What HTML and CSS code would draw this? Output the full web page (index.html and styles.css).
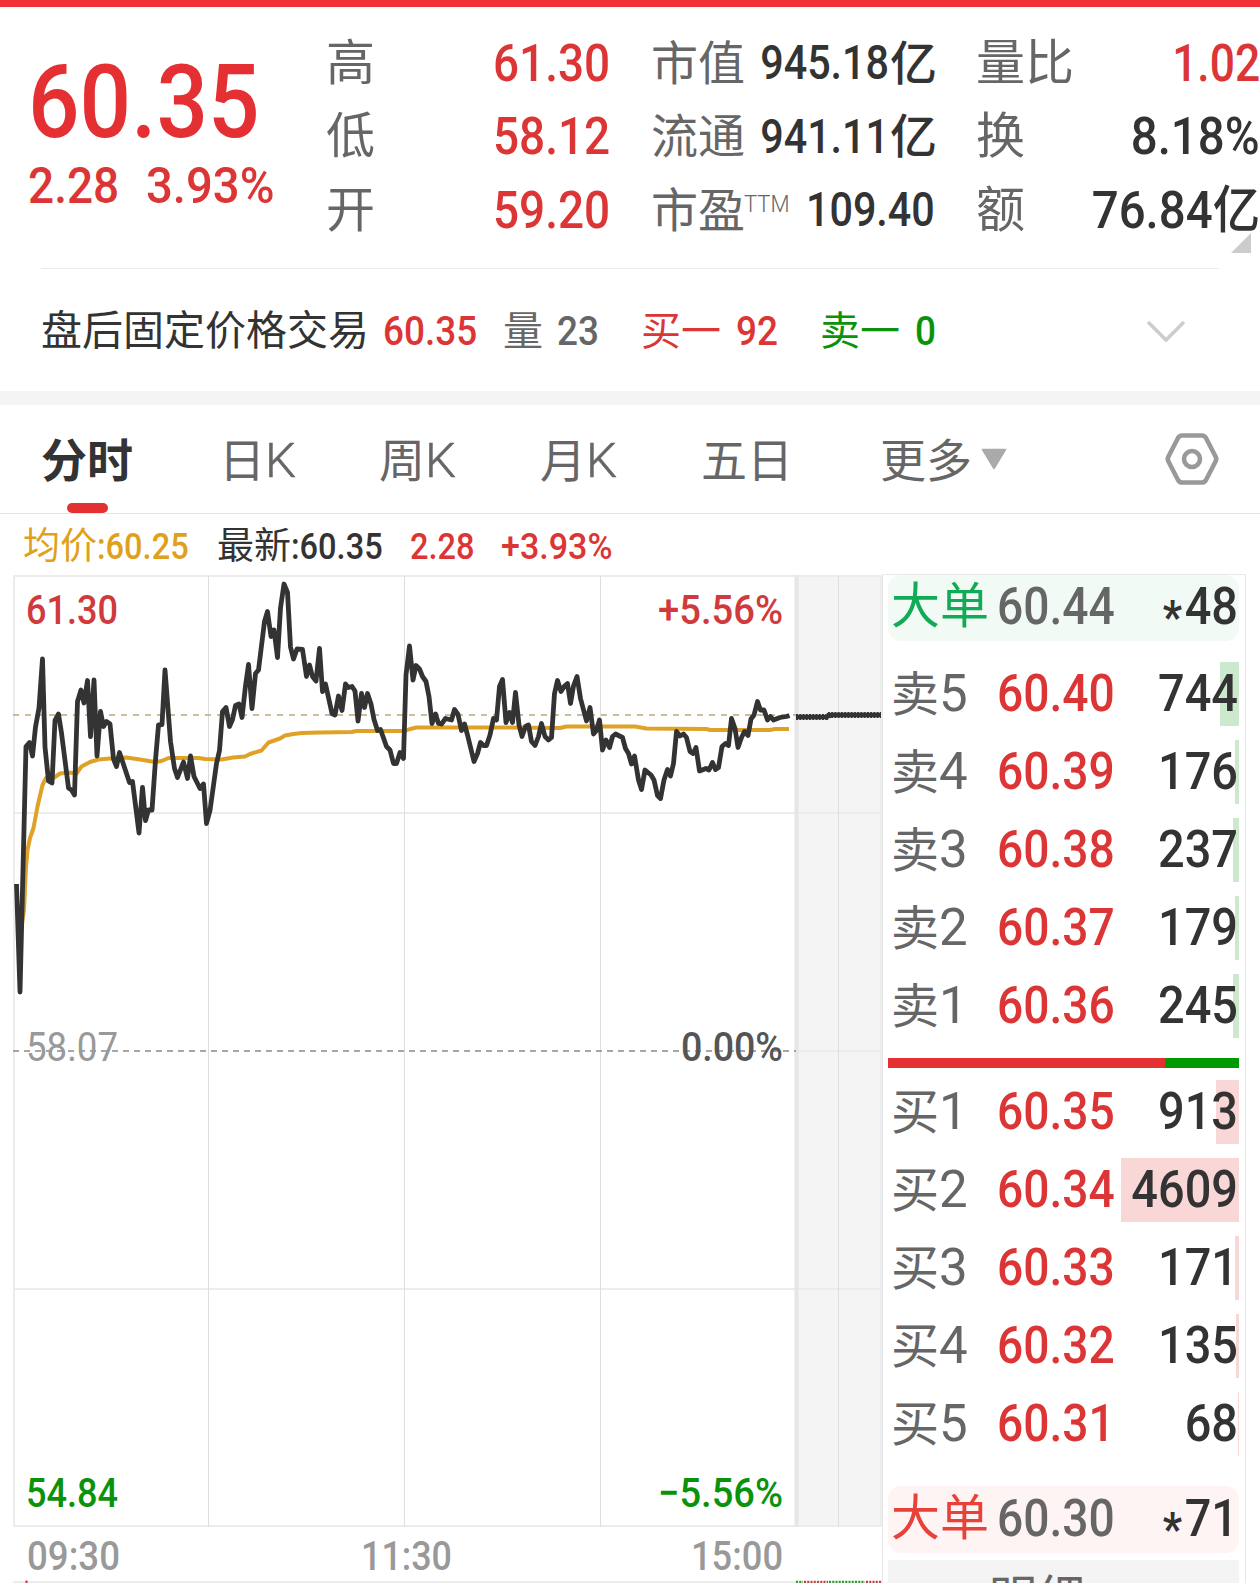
FILE: index.html
```html
<!DOCTYPE html>
<html lang="zh-CN">
<head>
    <meta charset="UTF-8">
    <meta name="viewport" content="width=device-width, initial-scale=1.0">
    <title>分时行情</title>
    <link rel="stylesheet" href="styles.css">
</head>
<body>
    <div class="topbar"></div>

    <section class="quote">
        <div class="price">
            <div class="last"><span class="num">60.35</span></div>
            <div class="change"><span class="num">2.28</span><span class="num pct">3.93%</span></div>
        </div>
        <div class="stats">
            <div class="row"><span class="lbl">高</span><span class="num up">61.30</span></div>
            <div class="row"><span class="lbl">低</span><span class="num up">58.12</span></div>
            <div class="row"><span class="lbl">开</span><span class="num up">59.20</span></div>
        </div>
        <div class="stats mid">
            <div class="row"><span class="lbl">市值</span><span class="num">945.18</span><span class="unit">亿</span></div>
            <div class="row"><span class="lbl">流通</span><span class="num">941.11</span><span class="unit">亿</span></div>
            <div class="row"><span class="lbl">市盈<sup>TTM</sup></span><span class="num pe">109.40</span></div>
        </div>
        <div class="stats last-col">
            <div class="row"><span class="lbl">量比</span><span class="num up ratio-num">1.02</span></div>
            <div class="row"><span class="lbl">换</span><span class="num">8.18%</span></div>
            <div class="row"><span class="lbl">额</span><span class="num">76.84亿</span></div>
        </div>
        <span class="corner"></span>
    </section>

    <section class="after">
        <span class="name">盘后固定价格交易</span>
        <span class="num up a-price">60.35</span>
        <span class="gray a-vol">量</span><span class="num gray a-n">23</span>
        <span class="up a-buy">买一</span><span class="num up a-n">92</span>
        <span class="down a-sell">卖一</span><span class="num down a-n">0</span>
        <svg class="chevron" width="42" height="26" viewBox="0 0 42 26"><path d="M3 3 L21 21 L39 3" fill="none" stroke="#ccc" stroke-width="3.5"/></svg>
    </section>

    <div class="band"></div>

    <nav class="tabs">
        <span class="tab active">分时</span>
        <span class="tab t-day">日<i>K</i></span>
        <span class="tab t-week">周<i>K</i></span>
        <span class="tab t-month">月<i>K</i></span>
        <span class="tab t-five">五日</span>
        <span class="tab t-more">更多</span>
        <svg class="arrow" width="26" height="22" viewBox="0 0 26 22"><path d="M1.5 1.5 H24.5 L13 20.5 Z" fill="#aaa" stroke="#aaa" stroke-width="1.5" stroke-linejoin="round"/></svg>
        <svg class="setting" width="56" height="54" viewBox="0 0 56 54">
            <g fill="none" stroke="#999" stroke-width="4.6">
                <path d="M18 3.5 H38 Q40.500 3.500 42 6 L51.500 24.500 Q53 27 51.500 29.500 L42 48 Q40.500 50.500 38 50.500 H18 Q15.500 50.500 14 48 L4.500 29.500 Q3 27 4.500 24.500 L14 6 Q15.500 3.500 18 3.500 Z"/>
                <circle cx="28" cy="27" r="8"/>
            </g>
        </svg>
    </nav>

    <div class="legend">
        <span class="avg">均价<b>:60.25</b></span>
        <span class="now">最新<b>:60.35</b></span>
        <span class="num up l-chg">2.28</span>
        <span class="num up l-pct">+3.93%</span>
    </div>

    <main class="board">
        <svg class="chart" width="882" height="1009" viewBox="0 574 882 1009">
            <!-- after-hours area -->
            <rect x="797" y="576" width="84" height="950" fill="#f4f4f4"/>
            <!-- grid -->
            <g stroke="#ececec" stroke-width="2">
                <path d="M13 576 H882 M13 813 H882 M797 1051 H882 M13 1289 H882 M13 1526 H882 M13 1582 H882"/>
                <path d="M14 575 V1527 M881 575 V1527"/>
                <path d="M796.500 575 V1527" stroke="#e6e6e6" stroke-width="4"/>
                <path d="M208.500 575 V1527 M404.500 575 V1527 M600.500 575 V1527 M838.500 575 V1527" stroke="#dedede" stroke-width="1"/>
            </g>
            <path d="M13 715 H796" stroke="#bfa67c" stroke-width="1.7" stroke-dasharray="6 6"/>
            <path d="M13 1051 H796" stroke="#8a8a8a" stroke-width="1.500" stroke-dasharray="6 5"/>

            <polyline class="avg-line" points="17,900 21,930 24,910 26,867 27.500,850 30,838 33.500,828 37.500,806.500 42.500,785 46,778 53.500,778 60,773.500 68.500,772.500 76.500,773.500 81.500,766.500 90,762 98.500,759.500 110,758.500 126.500,757.500 140,759.500 155,762 161.500,761 168.500,758 198.500,758 205,759 221.500,759.500 233,757.500 245,756.500 250,754 261.500,750.500 268.500,742.500 280,738.500 285,735.500 293.500,734 301.500,733 320,732.500 351.500,732 356.500,731 405,731 410,729 416.500,727.500 500,727.500 560,728 566.500,726.500 635,726.500 646.500,728.500 706.500,729 710,730 770,730 775,729 789,729"/>
            <polyline class="price-line" points="16.500,884 20,992 26,746.500 29.500,742.500 32.500,756 35.500,727 39,708 42.500,659 45,747 48.500,781 52,783 55,720.500 58.500,714 61.500,733 68.500,788 71.500,790 74.500,795 77.500,701.500 81,690 84,703 87.500,680.500 90.500,736.500 94,680 97,756 100.500,711.500 103.500,726.500 106.500,721.500 110,724 113.500,759 116.500,766.500 119.500,752.500 129.500,782.500 132.500,781.500 139,833 142.500,787.500 145.500,820.500 148.500,810 152,810 155.500,760 158.500,725 162,724.500 165,670 170.500,741.500 174.500,768.500 177.500,777.500 183.500,762 187.500,778.500 190.500,756 194,776.500 200,788.500 203.500,784 206.500,823.500 210,810.500 216.500,763.500 219.500,750.500 222.500,711.500 226,707.500 229.500,726.500 232.500,719.500 235.500,705.500 239,704 242,717.500 245.500,686 248.500,664.500 252,708.500 255.500,673.500 258.500,670 264.500,621.500 267.500,611.500 271,636.500 274,630 277.500,657.500 280.500,608 284,584 287.500,592.500 290.500,647 293.500,659 297,649 302.500,649.500 306.500,676.500 309.500,665 312.500,676.500 316,681 319.500,648.500 322.500,691.500 325.500,684 332,713.500 335,715 338.500,696 342,710.500 345.500,684 348.500,687.500 352,686.500 355,691 358,721 361.500,693.500 364.500,707.500 367.500,693.500 371,704 374,719.500 377.500,730.500 380.500,729.500 386.500,746.500 390,750 393.500,763.500 396.500,763.500 400,752.500 403.500,758.500 406,675 409.500,646 413,680 416,665.500 419.500,669 422.500,676.500 426,681.500 429,696.500 432,723.500 435.500,714 438.500,723.500 441.500,724 445.500,718.500 451.500,720 454.500,709.500 458,714.500 461.500,730.500 464.500,724 467.500,735 474,761.500 477.500,753.500 480.500,742.500 483.500,745.500 486.500,745.500 490,735 493.500,718.500 496.500,720 499.500,686.500 502.500,679.500 506,722.500 509.500,712.500 512.500,722.500 515.500,692.500 519,725 522,736.500 525.500,726.500 528.500,725 531.500,741.500 535,745.500 538.500,736.500 541.500,723.500 545,736.500 548.500,740 551.500,737.500 554.500,693.500 557.500,680.500 561,691.500 564.500,686 567.500,683.500 570.500,703.500 573.500,686 577,676.500 580.500,698.500 586.500,721 590,707.500 593.500,734 596.500,730.500 599.500,720 602.500,750 606,740 609.500,747.500 612.500,736.500 615.500,734 622.500,737.500 625.500,748.500 628.500,753.500 631.500,764 634.500,756 638.500,780 641.500,789.500 645,770 651,775 654,780 657.500,795.500 660.500,798.500 664,780 667.500,769.500 670.500,776 673.500,763.500 676.500,731.500 680,736 683.500,734 686.500,737.500 690,751.500 693,753.500 696,747.500 699.500,771 706,768.500 709,770 712.500,762.500 715.500,769.500 718.500,767.500 722,746.500 725.500,743.500 728.500,745.500 731.500,718.500 735,728.500 738,747.500 741.500,737.500 744.500,731.500 748,735.500 751,719 754,715 757.500,701.500 760.500,710 764,710 767.500,720 770.500,716.500 773.500,720 780,717.500 786.500,716.500 789.500,715.500"/>
            <path d="M796 717 H826.500 L829.500 715 H881" fill="none" stroke="#333" stroke-width="4.500"/>
            <path d="M796 717 H826.500 L829.500 715 H881" fill="none" stroke="#333" stroke-width="6" stroke-dasharray="2 1.250"/>

            <!-- axis labels -->
            <g class="axis">
                <text x="26" y="624" textLength="92" lengthAdjust="spacingAndGlyphs" class="up">61.30</text>
                <text x="658" y="624" textLength="125" lengthAdjust="spacingAndGlyphs" class="up">+5.56%</text>
                <text x="26" y="1061" textLength="92" lengthAdjust="spacingAndGlyphs" class="base">58.07</text>
                <text x="681" y="1061" textLength="102" lengthAdjust="spacingAndGlyphs" class="zero">0.00%</text>
                <text x="26" y="1507" textLength="92" lengthAdjust="spacingAndGlyphs" class="down">54.84</text>
                <text x="658" y="1507" textLength="125" lengthAdjust="spacingAndGlyphs" class="down">−5.56%</text>
                <text x="27" y="1570" textLength="93" lengthAdjust="spacingAndGlyphs" class="time">09:30</text>
                <text x="361" y="1570" textLength="91" lengthAdjust="spacingAndGlyphs" class="time">11:30</text>
                <text x="691" y="1570" textLength="92" lengthAdjust="spacingAndGlyphs" class="time">15:00</text>
            </g>

            <!-- top edge of the volume pane -->
            <path d="M26.500 1580.500 V1583" stroke="#c33" stroke-width="2"/>
            <g fill="none" stroke-width="2.500" stroke-dasharray="2 1.250">
                <path d="M796 1582 H803 M829 1582 H865" stroke="#393"/>
                <path d="M804 1582 H828 M866 1582 H881" stroke="#b44"/>
            </g>
        </svg>

        <aside class="book">
            <div class="big sell"><span class="tag">大单</span><span class="num p">60.44</span><span class="num q"><em>*</em>48</span></div>

            <div class="levels asks">
                <div class="level"><span class="lbl">卖<i>5</i></span><span class="num p">60.40</span><span class="num q">744</span><span class="bar" style="width:19px"></span></div>
                <div class="level"><span class="lbl">卖<i>4</i></span><span class="num p">60.39</span><span class="num q">176</span><span class="bar" style="width:4px"></span></div>
                <div class="level"><span class="lbl">卖<i>3</i></span><span class="num p">60.38</span><span class="num q">237</span><span class="bar" style="width:6px"></span></div>
                <div class="level"><span class="lbl">卖<i>2</i></span><span class="num p">60.37</span><span class="num q">179</span><span class="bar" style="width:4px"></span></div>
                <div class="level"><span class="lbl">卖<i>1</i></span><span class="num p">60.36</span><span class="num q">245</span><span class="bar" style="width:6px"></span></div>
            </div>

            <div class="ratio"><span class="r-buy" style="width:277px"></span><span class="r-sell"></span></div>

            <div class="levels bids">
                <div class="level"><span class="lbl">买<i>1</i></span><span class="num p">60.35</span><span class="num q">913</span><span class="bar" style="width:23px"></span></div>
                <div class="level"><span class="lbl">买<i>2</i></span><span class="num p">60.34</span><span class="num q">4609</span><span class="bar" style="width:118px"></span></div>
                <div class="level"><span class="lbl">买<i>3</i></span><span class="num p">60.33</span><span class="num q">171</span><span class="bar" style="width:4px"></span></div>
                <div class="level"><span class="lbl">买<i>4</i></span><span class="num p">60.32</span><span class="num q">135</span><span class="bar" style="width:3px"></span></div>
                <div class="level"><span class="lbl">买<i>5</i></span><span class="num p">60.31</span><span class="num q">68</span><span class="bar" style="width:1px"></span></div>
            </div>

            <div class="big buy"><span class="tag">大单</span><span class="num p">60.30</span><span class="num q"><em>*</em>71</span></div>
            <div class="detail">明细</div>
        </aside>
    </main>
</body>
</html>
```
FILE: styles.css
```css
* { box-sizing: border-box; }
body { margin: 0; width: 1260px; height: 1583px; overflow: hidden; background: #fff; color: #333; font-family: Roboto, "Noto Sans CJK SC", sans-serif; line-height: 1; }
i, em { font-style: normal; }
svg { display: block; }

.num { display: inline-block; font-weight: 500; white-space: nowrap; transform: scaleX(0.92); transform-origin: left center; }
.up { color: #dc3535; }
.down { color: #0a930a; }
.gray { color: #666; }

/* header */
.topbar { height: 7px; background: #f23038; }
.quote { position: relative; display: flex; height: 262px; padding-top: 19px; }
.quote::after { content: ""; position: absolute; left: 41px; right: 41px; bottom: 0; height: 1px; background: #ececec; }
.price { width: 326px; padding-left: 28px; }
.last { height: 102px; margin-top: 25px; font-size: 102px; color: #e53033; }
.last .num { transform: scaleX(0.89); }
.change { display: flex; margin-top: 8px; font-size: 50px; color: #dc3535; }
.change .num { width: 118px; }
.change .pct { transform: scaleX(0.945); }
.stats { width: 284px; margin-right: 41px; }
.stats .row { display: flex; justify-content: space-between; align-items: center; height: 73.5px; padding-top: 1px; white-space: nowrap; }
.stats .lbl { font-size: 49px; color: #666; }
.stats .num { font-size: 51px; transform: scaleX(0.9); transform-origin: right center; }
.mid { width: 286px; margin-right: 39px; }
.mid .lbl { position: relative; font-size: 47px; width: 94px; }
.mid .num { margin-left: auto; font-size: 48px; transform: scaleX(0.86); }
.mid .num.pe { margin-right: 2px; transform: scaleX(0.86); }
.mid .unit { width: 48px; padding-left: 1px; font-size: 47px; font-weight: 500; }
.mid .row { position: relative; }
.mid .num:not(.pe) { margin-left: -10px; flex: 1; text-align: right; }
.mid sup { position: absolute; left: 93px; top: 5px; font-size: 24px; font-weight: 300; line-height: 1; transform: scaleX(0.92); transform-origin: left center; }
.last-col { margin-right: 0; width: 284px; }
.last-col .num { transform: scaleX(0.93); }
.last-col .ratio-num { transform: scaleX(0.87); }
.corner { position: absolute; left: 1231px; top: 226px; width: 20px; height: 20px; background: #ccc; clip-path: polygon(100% 0, 100% 100%, 0 100%); }

/* after-hours row */
.after { display: flex; align-items: center; height: 122px; padding: 3px 0 0 41px; font-size: 41px; white-space: nowrap; }
.after .num { transform: scaleX(0.9); }
.name { width: 342px; }
.a-price { width: 120px; }
.a-vol { width: 54px; font-size: 40px; }
.a-n { width: 84px; }
.a-buy, .a-sell { width: 95px; font-size: 40px; }
.chevron { margin-left: 146px; }

.band { height: 14px; background: #f4f4f4; }

/* period tabs */
.tabs { display: flex; align-items: center; height: 109px; padding-left: 41px; border-bottom: 1px solid #e5e5e5; font-size: 46px; color: #666; white-space: nowrap; }
.tab { padding-top: 3px; }
.tab i { font-size: 49px; font-weight: 300; -webkit-text-stroke: 0.5px #666; }
.tab.active { position: relative; font-weight: 700; color: #333; }
.tab.active::after { content: ""; position: absolute; left: 26px; top: 68px; width: 41px; height: 10px; border-radius: 5px; background: #e53033; }
.active { width: 178px; }
.t-day { width: 160px; }
.t-week { width: 161px; }
.t-month { width: 161px; }
.t-five { width: 179px; }
.t-more { width: 101px; }
.setting { margin-left: 157px; }

/* legend */
.legend { display: flex; align-items: center; height: 60px; padding: 5px 0 0 23px; font-size: 37px; white-space: nowrap; }
.legend b { font-weight: 500; display: inline-block; transform: scaleX(0.88); transform-origin: left center; }
.legend .l-chg { transform: scaleX(0.88); }
.avg { width: 194px; color: #dfa11d; }
.now { width: 193px; }
.l-chg { width: 91px; }

/* chart */
.board { display: flex; }
.axis { font-size: 41px; font-weight: 500; }
.axis .up { fill: #d03a3c; }
.axis .down { fill: #0a930a; }
.axis .base { fill: #999; font-weight: 400; }
.axis .zero { fill: #555; }
.axis .time { fill: #999; font-size: 40px; }
.avg-line { fill: none; stroke: #dfa126; stroke-width: 4; stroke-linejoin: round; }
.price-line { fill: none; stroke: #333; stroke-width: 4.8; stroke-linejoin: round; }

/* order book */
.book { width: 364px; height: 1009px; border: 1px solid #e8e8e8; border-bottom: 0; padding: 0 6px 0 5px; overflow: hidden; }
.big, .level { position: relative; display: flex; align-items: center; padding-left: 3px; font-size: 51px; white-space: nowrap; }
.big { height: 66px; padding-bottom: 3px; border-radius: 13px; }
.big.sell { background: #f2faf6; }
.big.buy { height: 67px; background: #fff4f4; }
.tag { flex: none; width: 106px; font-size: 49px; }
.sell .tag { color: #12ab55; }
.buy .tag { color: #e8413a; }
.big .p { color: #666; }
.level { height: 64px; padding-bottom: 2px; }
.level + .level { margin-top: 14px; }
.level .lbl { flex: none; width: 106px; font-size: 48px; color: #666; }
.level .lbl i { font-size: 51px; }
.p { flex: none; width: 124px; }
.book .p { transform: scaleX(0.905); }
.level .p { color: #dc3535; }
.q { position: relative; z-index: 1; flex: none; width: 117px; text-align: right; transform-origin: right center; }
.q em { position: relative; top: 9px; margin-right: 3px; font-weight: 700; font-size: 46px; }
.bar { position: absolute; right: 0; top: 0; height: 64px; }
.asks { margin-top: 21px; }
.asks .bar { background: #cde9cd; }
.bids { margin-top: 12px; }
.bids .bar { background: #f9d7d7; }
.ratio { display: flex; height: 10px; margin-top: 20px; }
.r-buy { background: #e53033; }
.r-sell { flex: 1; background: #009a00; }
.big.buy { margin-top: 30px; }
.detail { height: 40px; margin-top: 7px; padding: 15px 53px 0 0; background: #f4f4f4; text-align: center; font-size: 48px; color: #666; }
```
